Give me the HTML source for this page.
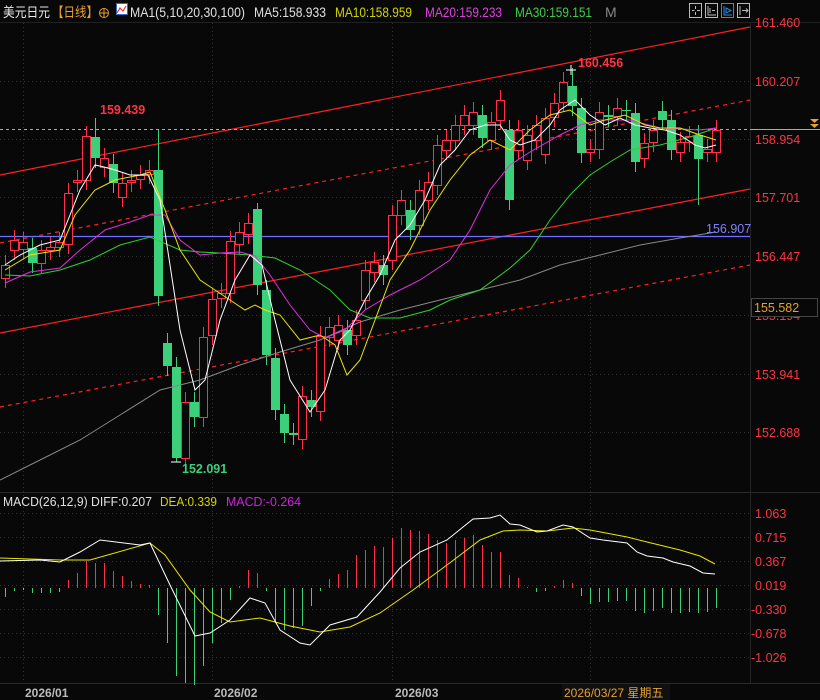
<!DOCTYPE html>
<html><head><meta charset="utf-8"><style>
html,body{margin:0;padding:0;background:#080808;width:820px;height:700px;overflow:hidden}
svg{display:block}
text{font-family:"Liberation Sans","Noto Sans CJK SC",sans-serif}
</style></head><body>
<svg id="s" width="820" height="700" xmlns="http://www.w3.org/2000/svg">
<rect width="820" height="700" fill="#080808"/>
<g id="grid" stroke="#333" stroke-dasharray="1,3" stroke-width="1"></g>
<line x1="0" y1="22.5" x2="820" y2="22.5" stroke="#202020"/>
<text x="3" y="17" font-size="13.5" fill="#e8e8e8" textLength="47" lengthAdjust="spacingAndGlyphs">美元日元</text>
<text x="52" y="17" font-size="13.5" fill="#e8a030" textLength="46" lengthAdjust="spacingAndGlyphs">【日线】</text>
<circle cx="104" cy="13" r="4.5" fill="none" stroke="#e8a030"/><line x1="99.5" y1="13" x2="108.5" y2="13" stroke="#e8a030"/><line x1="104" y1="8.5" x2="104" y2="17.5" stroke="#e8a030"/>
<rect x="116.5" y="3.5" width="11" height="11" fill="#fff" stroke="#36c"/><polyline points="117,13 120,8 123,11 126,6" fill="none" stroke="#e33" stroke-width="1.2"/>
<text x="130" y="17" font-size="14" fill="#e0e0e0" textLength="115" lengthAdjust="spacingAndGlyphs">MA1(5,10,20,30,100)</text>
<text x="254" y="17" font-size="14" fill="#e0e0e0" textLength="72" lengthAdjust="spacingAndGlyphs">MA5:158.933</text>
<text x="335" y="17" font-size="14" fill="#d4d400" textLength="77" lengthAdjust="spacingAndGlyphs">MA10:158.959</text>
<text x="425" y="17" font-size="14" fill="#e040e0" textLength="77" lengthAdjust="spacingAndGlyphs">MA20:159.233</text>
<text x="515" y="17" font-size="14" fill="#3cd04a" textLength="77" lengthAdjust="spacingAndGlyphs">MA30:159.151</text>
<text x="605" y="17" font-size="14" fill="#888">M</text>
<g fill="none" stroke="#bbb"><rect x="689.5" y="3.5" width="12" height="14"/><rect x="705.5" y="3.5" width="12" height="14"/><rect x="721.5" y="3.5" width="12" height="14" stroke="#2a8ee0"/><rect x="737.5" y="3.5" width="12" height="14"/>
<path d="M695.5 6v3M695.5 12v3M692 10.5h2.5M697 10.5h3"/><path d="M708 6v9h8M710 8v5M712 10.5h3"/><path d="M724 6v9h8M726 8l5 2.5-5 2.5z" stroke="#2a8ee0"/><path d="M740 6v9M742 10.5h6M746 8.5l2 2-2 2"/></g>
<line x1="0" y1="492.5" x2="820" y2="492.5" stroke="#2a2a2a"/>
<line x1="0" y1="683.5" x2="820" y2="683.5" stroke="#2a2a2a"/>
<g id="chart"></g>
<g font-size="12.5" fill="#ff3440">
<text x="755" y="27">161.460</text><text x="755" y="86">160.207</text><text x="755" y="144">158.954</text><text x="755" y="202">157.701</text><text x="755" y="261">156.447</text><text x="755" y="320">155.194</text><text x="755" y="379">153.941</text><text x="755" y="437">152.688</text>
<text x="755" y="518">1.063</text><text x="755" y="542">0.715</text><text x="755" y="566">0.367</text><text x="755" y="590">0.019</text><text x="751" y="614">-0.330</text><text x="751" y="638">-0.678</text><text x="751" y="662">-1.026</text>
<text x="578" y="67" font-weight="bold">160.456</text><text x="100" y="114" font-weight="bold">159.439</text>
</g>
<text x="182" y="473" font-size="12.5" font-weight="bold" fill="#3cd07a">152.091</text>
<text x="706" y="233" font-size="12.5" fill="#8080ff">156.907</text>
<rect x="751.5" y="298.5" width="66" height="18" fill="#080808" stroke="#444"/>
<text x="754" y="312" font-size="12.5" fill="#e8a030">155.582</text>
<path d="M810 119h9l-4.5 4zM810 124h9l-4.5 4z" fill="#e8a030"/>
<text x="3" y="506" font-size="12.5" fill="#e0e0e0" textLength="149" lengthAdjust="spacingAndGlyphs">MACD(26,12,9) DIFF:0.207</text>
<text x="160" y="506" font-size="12.5" fill="#d4d400" textLength="57" lengthAdjust="spacingAndGlyphs">DEA:0.339</text>
<text x="226" y="506" font-size="12.5" fill="#d020e0" textLength="75" lengthAdjust="spacingAndGlyphs">MACD:-0.264</text>
<g font-size="12" font-weight="bold" fill="#bbb"><text x="25" y="697">2026/01</text><text x="214" y="697">2026/02</text><text x="395" y="697">2026/03</text></g>
<rect x="562" y="684" width="108" height="16" fill="#101010"/>
<text x="564" y="697" font-size="12" fill="#e8a030">2026/03/27 星期五</text>
</svg>
<script>
var NS="http://www.w3.org/2000/svg",ch=document.getElementById('chart'),gr=document.getElementById('grid');
function el(t,a,p){var e=document.createElementNS(NS,t);for(var k in a)e.setAttribute(k,a[k]);(p||ch).appendChild(e);return e}
[22,81,139,197,256,315,374,432,513,537,561,585,609,633,657].forEach(function(y){el('line',{x1:0,y1:y+.5,x2:750,y2:y+.5},gr)});
[23,212,392,590].forEach(function(x){el('line',{x1:x+.5,y1:23,x2:x+.5,y2:683},gr)});
el('line',{x1:750.5,y1:23,x2:750.5,y2:683,stroke:'#262626'});
el('line',{x1:0,y1:175,x2:750,y2:27,stroke:'#ff2020','stroke-width':1.2});
el('line',{x1:0,y1:333,x2:750,y2:189,stroke:'#ff2020','stroke-width':1.2});
el('line',{x1:0,y1:243,x2:750,y2:100,stroke:'#ff2020','stroke-width':1.2,'stroke-dasharray':'4,4'});
el('line',{x1:0,y1:407,x2:750,y2:265,stroke:'#ff2020','stroke-width':1.2,'stroke-dasharray':'4,4'});
el('line',{x1:0,y1:236.5,x2:750,y2:236.5,stroke:'#7070ff','stroke-width':1.2});
el('line',{x1:0,y1:129.5,x2:750,y2:129.5,stroke:'#e8a050','stroke-dasharray':'3,3'});
el('line',{x1:750,y1:129.5,x2:820,y2:129.5,stroke:'#e8a030'});
var C=[[265,278,'r'],[240,250,'r'],[242,249,'r'],[248,263,'g'],[250,263,'r'],[247,250,'r'],[242,247,'r'],[193,244,'r'],[180,182,'r'],[136,180,'r'],[137,158,'g',118],[158,167,'r'],[164,183,'g'],[183,197,'r'],[180,182,'r'],[175,179,'r'],[170,174,'r'],[170,296,'g',130],[343,366,'g'],[367,458,'g',0,462],[402,458,'r'],[402,417,'g'],[337,417,'r'],[299,335,'r'],[293,298,'r'],[241,293,'r'],[232,244,'r'],[223,234,'r'],[209,285,'g',203],[290,355,'g'],[358,410,'g'],[414,433,'g'],[433,435,'g'],[396,439,'r'],[400,407,'g'],[336,411,'r'],[327,337,'r'],[325,340,'r'],[330,345,'g'],[320,335,'r'],[270,300,'r'],[262,272,'r'],[265,275,'g'],[215,260,'r'],[200,215,'r'],[210,230,'g'],[190,225,'r'],[182,200,'r'],[145,185,'r'],[140,150,'r'],[125,140,'r'],[115,125,'r'],[112,125,'r'],[115,138,'g'],[122,140,'r'],[100,120,'r'],[130,200,'g'],[130,150,'r'],[135,160,'r'],[125,140,'r'],[118,154,'r'],[103,117,'r'],[82,102,'r'],[86,106,'g',68],[108,153,'g'],[149,152,'r'],[112,149,'r'],[115,117,'g'],[108,116,'r'],[110,111,'g'],[113,162,'g'],[143,158,'r'],[130,142,'r'],[111,120,'g'],[120,150,'g'],[142,152,'r'],[136,142,'r'],[135,159,'g',0,205],[149,152,'r'],[130,152,'r']];
var n=C.length,sp=(716-5)/(n-1);
C.forEach(function(c,i){var x=Math.round(5+i*sp),col=c[2]=='r'?'#ff3048':'#3cd07a';var hi=c[3]||c[0]-10,lo=c[4]||c[1]+10;
el('line',{x1:x+.5,y1:hi,x2:x+.5,y2:lo,stroke:col});
if(c[2]=='r')el('rect',{x:x-3.5,y:c[0]+.5,width:8,height:Math.max(c[1]-c[0],1),fill:'#080808',stroke:col});
else el('rect',{x:x-4,y:c[0],width:9,height:Math.max(c[1]-c[0],1),fill:col});});
el('path',{d:'M566 70h10M571 65v10M171 462h10',stroke:'#fff'});
function pl(p,col,w){el('polyline',{points:p,fill:'none',stroke:col,'stroke-width':w||1})}
pl('0,480 40,460 80,440 120,415 160,390 200,380 240,365 280,352 320,340 360,322 400,310 440,300 480,290 520,280 560,265 600,255 640,245 680,238 716,232','#888');
pl('5,275 30,276 60,270 90,260 120,245 150,237 180,250 200,252 220,253 250,255 275,258 300,270 330,290 350,310 370,318 400,318 430,310 450,300 480,290 510,268 530,250 550,220 570,195 590,175 610,162 630,150 660,145 690,137 716,128','#30d030');
pl('5,283 30,272 60,268 80,250 105,230 130,222 150,215 165,215 180,240 200,255 220,253 240,252 255,256 270,275 290,305 310,330 325,338 345,330 365,310 390,295 420,280 450,260 470,230 490,190 510,165 530,152 560,135 580,125 600,120 630,120 660,128 700,130 716,128','#e030e0');
pl('5,270 30,255 60,250 75,215 95,190 115,180 140,175 150,172 165,210 180,250 200,280 215,290 230,300 245,310 255,305 265,310 280,315 300,340 320,335 335,345 347,375 360,360 375,320 390,280 410,250 430,210 450,180 470,155 490,140 510,150 530,130 550,115 570,110 590,125 605,120 625,115 645,125 660,128 680,128 700,135 716,140','#e8e800');
pl('5,265 20,255 40,245 60,240 80,190 95,165 104,167 115,170 130,175 148,175 160,200 180,330 195,390 205,380 220,320 235,280 250,255 262,265 275,320 290,380 310,412 325,390 340,340 350,330 365,300 380,275 395,240 410,225 425,200 440,165 455,150 470,130 485,125 500,125 510,140 520,145 535,140 550,125 560,110 575,100 590,115 605,125 620,118 635,125 650,128 665,130 680,135 695,145 705,148 716,145','#fff');
var M=[-9,-3,-2,-5,-5,-5,-4,8,15,27,25,25,17,12,7,4,3,-27,-55,-88,-95,-97,-78,-55,-35,-12,2,18,15,-3,-35,-42,-40,-38,-18,-3,9,14,18,33,38,42,41,50,60,58,57,54,48,45,48,50,53,43,36,36,13,10,1,-4,-3,2,8,5,-8,-16,-14,-14,-13,-13,-23,-25,-23,-20,-25,-25,-24,-25,-24,-20];
M.forEach(function(v,i){var x=Math.round(5+i*sp)+.5;el('line',{x1:x,y1:588,x2:x,y2:588-v,stroke:v>0?'#ff3048':'#3cd07a'})});
pl('0,558 60,560 90,560 150,543 165,555 190,590 210,612 230,622 260,618 290,626 320,632 350,627 380,613 413,590 447,565 480,540 503,531 520,530 547,531 573,528 590,530 627,537 647,542 680,550 700,556 715,564','#e8e800');
pl('0,561 40,560 60,562 80,552 100,540 140,545 150,543 170,585 195,636 210,633 230,620 250,598 265,603 280,630 300,643 310,645 330,625 357,617 380,592 400,568 420,552 447,540 473,519 490,518 500,515 510,524 520,525 537,532 547,531 563,525 573,527 590,538 603,540 627,543 637,552 647,556 663,558 673,562 690,566 703,573 715,574','#fff');
</script>
</body></html>
